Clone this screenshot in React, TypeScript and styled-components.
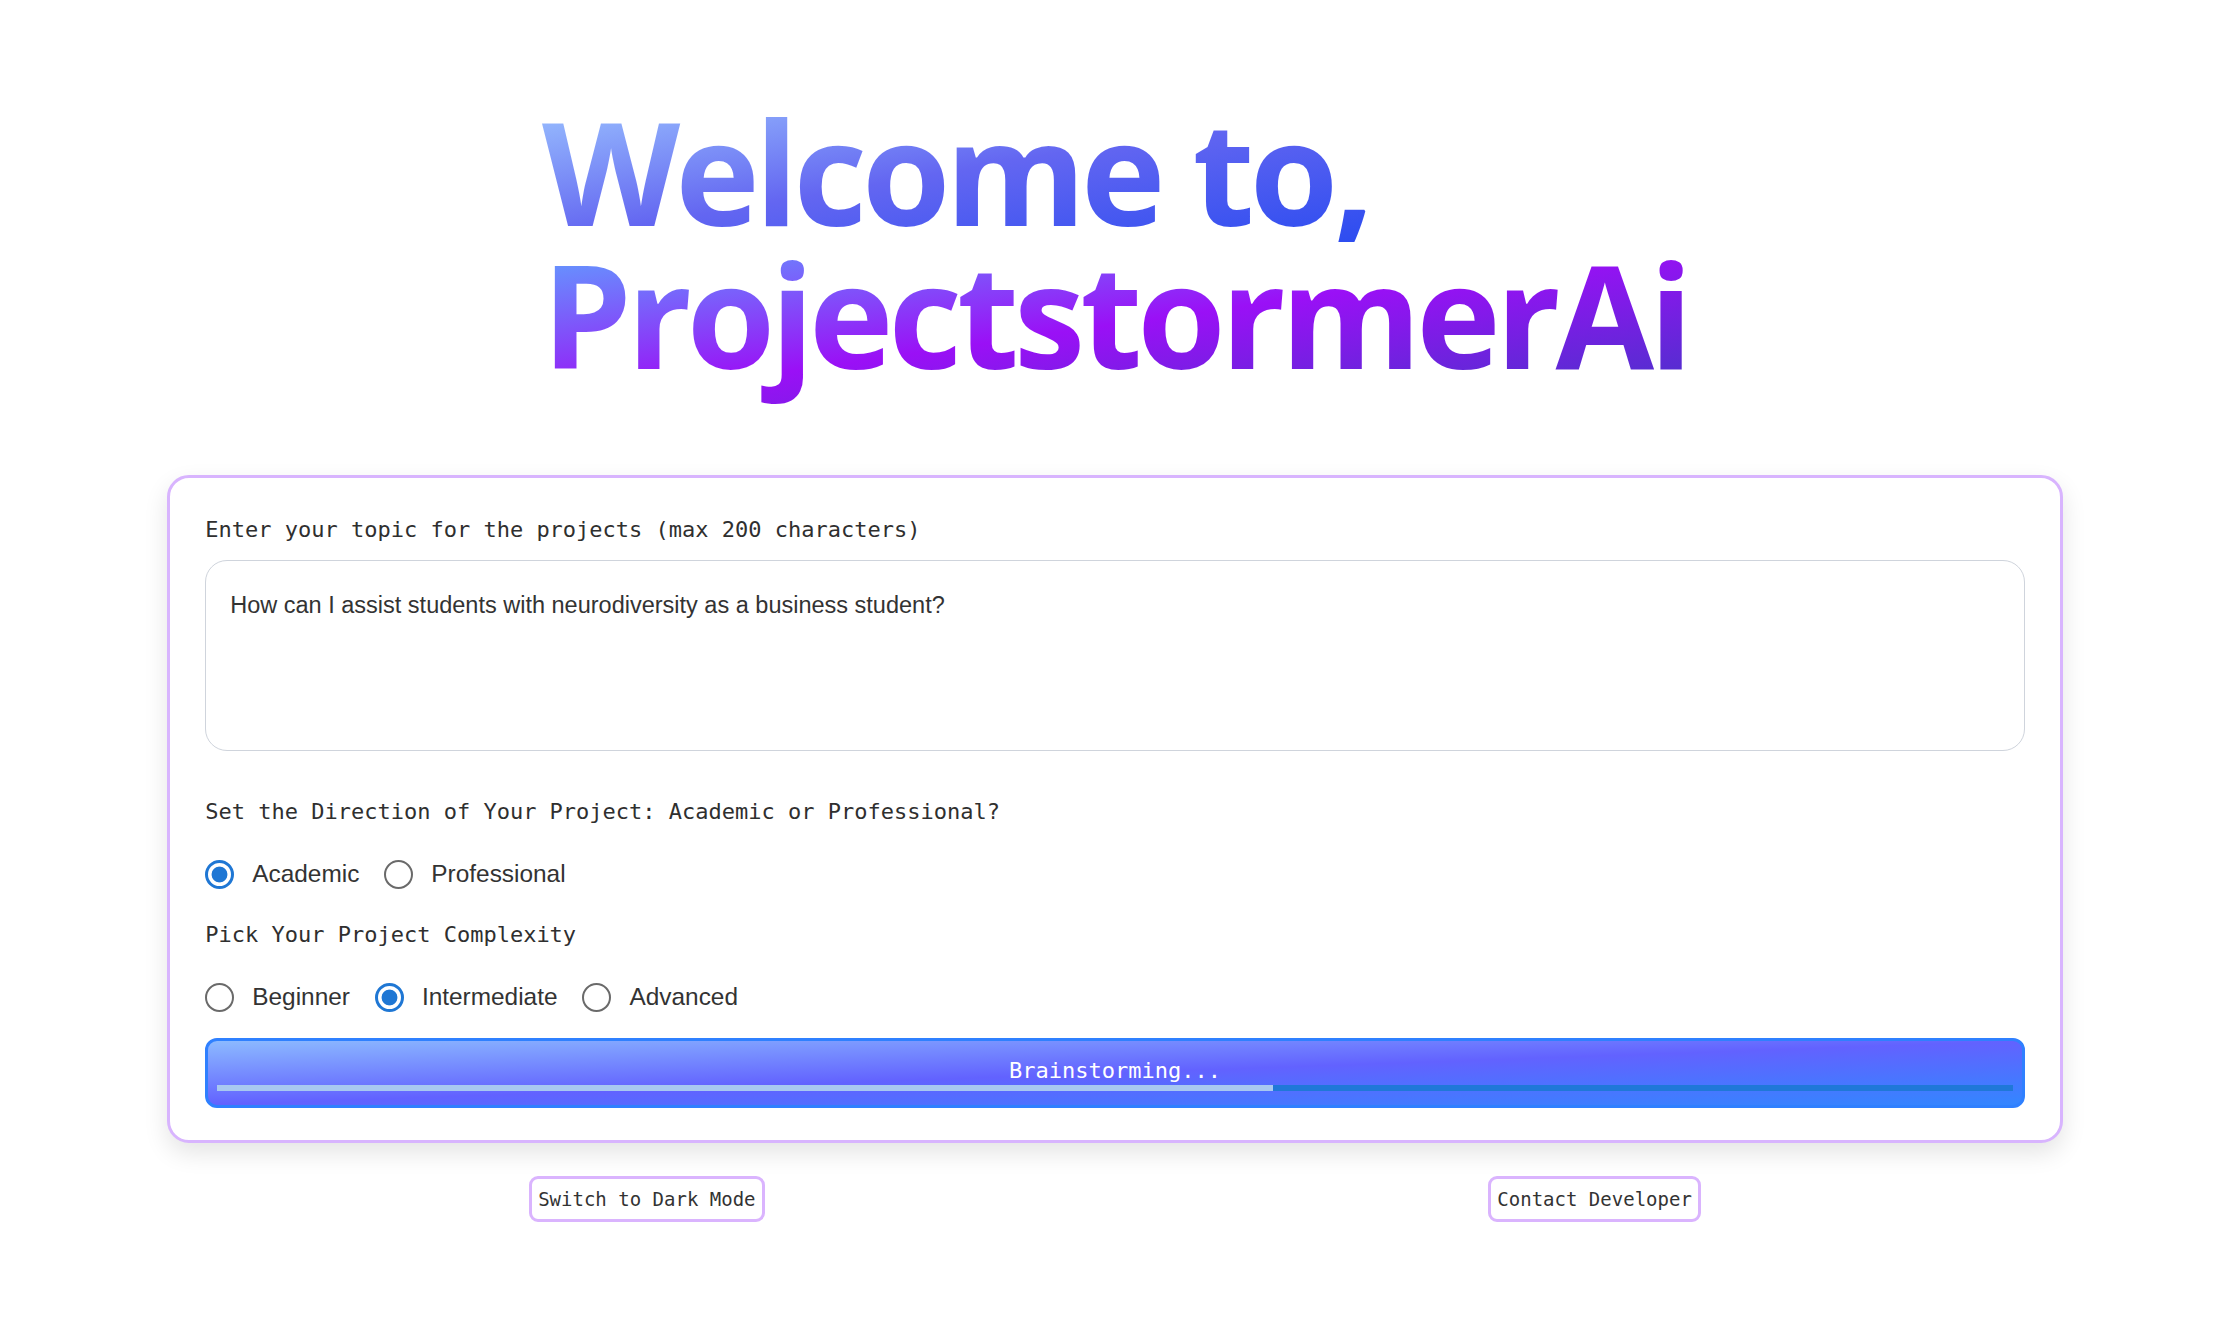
import React from "react";
import styled, { createGlobalStyle } from "styled-components";

const GlobalStyle = createGlobalStyle`
  html, body { margin: 0; padding: 0; background: #ffffff; }
  body { font-family: "Liberation Sans", Arial, sans-serif; color: #333; }
  *, *::before, *::after { box-sizing: border-box; }
`;

const Page = styled.main`
  display: flex;
  flex-direction: column;
  align-items: center;
  padding: 99px 0 80px;
`;

const Title = styled.h1`
  margin: 0;
  width: fit-content;
  font-family: "Open Sans", "Noto Sans", sans-serif;
  font-weight: 700;
  font-size: 143px;
  line-height: 1;
  letter-spacing: -5px;
  text-align: left;
`;

const TitleLine = styled.span<{ $from: string; $via: string; $to: string; $tail?: number }>`
  display: block;
  width: fit-content;
  padding-bottom: ${(p) => p.$tail ?? 0}px;
  margin-bottom: -${(p) => p.$tail ?? 0}px;
  background: linear-gradient(to bottom right, ${(p) => p.$from}, ${(p) => p.$via} 50%, ${(p) => p.$to});
  -webkit-background-clip: text;
  background-clip: text;
  color: transparent;
  -webkit-text-fill-color: transparent;
`;

const Card = styled.section`
  width: 85%;
  margin-top: 90px;
  border: 3px solid #d8b4fe;
  border-radius: 22px;
  background: #fff;
  box-shadow: 0 10px 24px rgba(0, 0, 0, 0.11);
  padding: 39px 35px 32px;
  display: flex;
  flex-direction: column;
`;

const FieldLabel = styled.label<{ $gap?: number }>`
  display: block;
  margin-top: ${(p) => p.$gap ?? 0}px;
  font-family: "DejaVu Sans Mono", "Liberation Mono", monospace;
  font-size: 22px;
  line-height: 26px;
  color: #2f2f2f;
`;

const TopicInput = styled.textarea`
  margin-top: 17px;
  width: 100%;
  height: 191px;
  border: 1px solid #cfd4dc;
  border-radius: 22px;
  padding: 27px 24px;
  resize: none;
  outline: none;
  font-family: "Liberation Sans", Arial, sans-serif;
  font-size: 23.5px;
  line-height: 34px;
  color: #333;
  background: #fff;
`;

const OptionRow = styled.div<{ $gap: number }>`
  display: flex;
  align-items: center;
  gap: 25px;
  height: 28px;
  margin-top: ${(p) => p.$gap}px;
`;

const Option = styled.label`
  display: flex;
  align-items: center;
  gap: 18px;
  font-family: "Liberation Sans", Arial, sans-serif;
  font-size: 24.4px;
  color: #333;
  cursor: pointer;
`;

const Radio = styled.input.attrs({ type: "radio" })`
  appearance: none;
  -webkit-appearance: none;
  margin: 0;
  width: 29px;
  height: 29px;
  flex-shrink: 0;
  border-radius: 50%;
  border: 2.5px solid #6a6a6a;
  background: #fff;
  cursor: pointer;

  &:checked {
    border: 3px solid #1f77d4;
    background: radial-gradient(circle, #1f77d4 0 7.5px, #fff 8.3px);
  }
`;

const BrainstormButton = styled.button`
  margin-top: 27px;
  width: 100%;
  height: 70px;
  border: 3px solid #2f80ff;
  border-radius: 12px;
  background: linear-gradient(to bottom right, #8cbaff, #6262ff 50%, #3386ff);
  display: flex;
  flex-direction: column;
  align-items: stretch;
  padding: 17px 9px 11px;
  font-family: "DejaVu Sans Mono", "Liberation Mono", monospace;
  font-size: 22px;
  line-height: 26px;
  color: #ffffff;
  cursor: progress;
`;

const ButtonText = styled.span`
  display: block;
  text-align: center;
`;

const Track = styled.div`
  margin-top: 1px;
  height: 6px;
  background: #1f78d8;
  display: flex;
`;

const TrackFill = styled.div`
  height: 100%;
  background: #a8c8f0;
`;

const FooterRow = styled.div`
  width: 85%;
  margin-top: 33px;
  display: flex;
  justify-content: space-around;
`;

const FooterButton = styled.button`
  height: 46px;
  padding: 0 6px;
  border: 3px solid #dab4fe;
  border-radius: 9px;
  background: #fff;
  font-family: "DejaVu Sans Mono", "Liberation Mono", monospace;
  font-size: 19px;
  color: #333;
  cursor: pointer;
`;

export default function App() {
  const progress = 58.8;
  return (
    <>
      <GlobalStyle />
      <Page>
        <Title>
          <TitleLine $from="#9cc4ff" $via="#6366f1" $to="#2c4cf0">
            Welcome to,
          </TitleLine>
          <TitleLine $from="#5ea6ff" $via="#9a10f6" $to="#4335c6" $tail={22}>
            ProjectstormerAi
          </TitleLine>
        </Title>

        <Card>
          <FieldLabel htmlFor="topic">
            Enter your topic for the projects (max 200 characters)
          </FieldLabel>
          <TopicInput
            id="topic"
            maxLength={200}
            defaultValue="How can I assist students with neurodiversity as a business student?"
          />

          <FieldLabel $gap={48}>
            Set the Direction of Your Project: Academic or Professional?
          </FieldLabel>
          <OptionRow $gap={35}>
            <Option>
              <Radio name="direction" value="academic" defaultChecked />
              Academic
            </Option>
            <Option>
              <Radio name="direction" value="professional" />
              Professional
            </Option>
          </OptionRow>

          <FieldLabel $gap={34}>Pick Your Project Complexity</FieldLabel>
          <OptionRow $gap={35}>
            <Option>
              <Radio name="complexity" value="beginner" />
              Beginner
            </Option>
            <Option>
              <Radio name="complexity" value="intermediate" defaultChecked />
              Intermediate
            </Option>
            <Option>
              <Radio name="complexity" value="advanced" />
              Advanced
            </Option>
          </OptionRow>

          <BrainstormButton type="button">
            <ButtonText>Brainstorming...</ButtonText>
            <Track>
              <TrackFill style={{ width: `${progress}%` }} />
            </Track>
          </BrainstormButton>
        </Card>

        <FooterRow>
          <FooterButton type="button">Switch to Dark Mode</FooterButton>
          <FooterButton type="button">Contact Developer</FooterButton>
        </FooterRow>
      </Page>
    </>
  );
}
